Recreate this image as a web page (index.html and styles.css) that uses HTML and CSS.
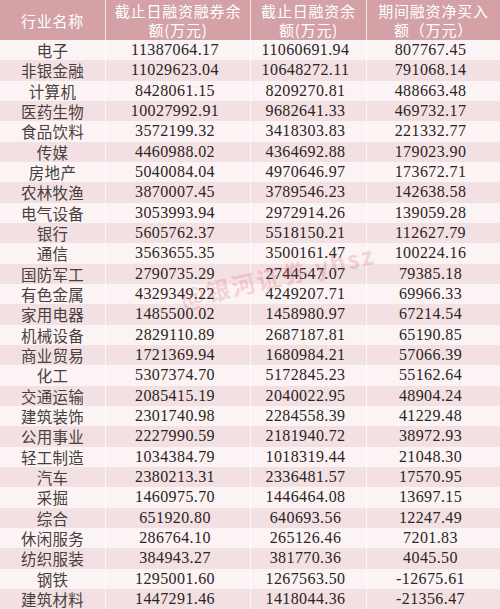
FILE: index.html
```html
<!DOCTYPE html>
<html lang="zh">
<head>
<meta charset="utf-8">
<title>行业融资余额</title>
<link rel="stylesheet" href="styles.css">
</head>
<body>
<div class="table">
  <div class="row head">
    <div class="cell">行业名称</div>
    <div class="cell">截止日融资融券余<br>额(万元)</div>
    <div class="cell">截止日融资余<br>额(万元)</div>
    <div class="cell">期间融资净买入<br>额（万元）</div>
  </div>
  <div class="row"><div class="cell name">电子</div><div class="cell num">11387064.17</div><div class="cell num">11060691.94</div><div class="cell num">807767.45</div></div>
  <div class="row"><div class="cell name">非银金融</div><div class="cell num">11029623.04</div><div class="cell num">10648272.11</div><div class="cell num">791068.14</div></div>
  <div class="row"><div class="cell name">计算机</div><div class="cell num">8428061.15</div><div class="cell num">8209270.81</div><div class="cell num">488663.48</div></div>
  <div class="row"><div class="cell name">医药生物</div><div class="cell num">10027992.91</div><div class="cell num">9682641.33</div><div class="cell num">469732.17</div></div>
  <div class="row"><div class="cell name">食品饮料</div><div class="cell num">3572199.32</div><div class="cell num">3418303.83</div><div class="cell num">221332.77</div></div>
  <div class="row"><div class="cell name">传媒</div><div class="cell num">4460988.02</div><div class="cell num">4364692.88</div><div class="cell num">179023.90</div></div>
  <div class="row"><div class="cell name">房地产</div><div class="cell num">5040084.04</div><div class="cell num">4970646.97</div><div class="cell num">173672.71</div></div>
  <div class="row"><div class="cell name">农林牧渔</div><div class="cell num">3870007.45</div><div class="cell num">3789546.23</div><div class="cell num">142638.58</div></div>
  <div class="row"><div class="cell name">电气设备</div><div class="cell num">3053993.94</div><div class="cell num">2972914.26</div><div class="cell num">139059.28</div></div>
  <div class="row"><div class="cell name">银行</div><div class="cell num">5605762.37</div><div class="cell num">5518150.21</div><div class="cell num">112627.79</div></div>
  <div class="row"><div class="cell name">通信</div><div class="cell num">3563655.35</div><div class="cell num">3500161.47</div><div class="cell num">100224.16</div></div>
  <div class="row"><div class="cell name">国防军工</div><div class="cell num">2790735.29</div><div class="cell num">2744547.07</div><div class="cell num">79385.18</div></div>
  <div class="row"><div class="cell name">有色金属</div><div class="cell num">4329349.22</div><div class="cell num">4249207.71</div><div class="cell num">69966.33</div></div>
  <div class="row"><div class="cell name">家用电器</div><div class="cell num">1485500.02</div><div class="cell num">1458980.97</div><div class="cell num">67214.54</div></div>
  <div class="row"><div class="cell name">机械设备</div><div class="cell num">2829110.89</div><div class="cell num">2687187.81</div><div class="cell num">65190.85</div></div>
  <div class="row"><div class="cell name">商业贸易</div><div class="cell num">1721369.94</div><div class="cell num">1680984.21</div><div class="cell num">57066.39</div></div>
  <div class="row"><div class="cell name">化工</div><div class="cell num">5307374.70</div><div class="cell num">5172845.23</div><div class="cell num">55162.64</div></div>
  <div class="row"><div class="cell name">交通运输</div><div class="cell num">2085415.19</div><div class="cell num">2040022.95</div><div class="cell num">48904.24</div></div>
  <div class="row"><div class="cell name">建筑装饰</div><div class="cell num">2301740.98</div><div class="cell num">2284558.39</div><div class="cell num">41229.48</div></div>
  <div class="row"><div class="cell name">公用事业</div><div class="cell num">2227990.59</div><div class="cell num">2181940.72</div><div class="cell num">38972.93</div></div>
  <div class="row"><div class="cell name">轻工制造</div><div class="cell num">1034384.79</div><div class="cell num">1018319.44</div><div class="cell num">21048.30</div></div>
  <div class="row"><div class="cell name">汽车</div><div class="cell num">2380213.31</div><div class="cell num">2336481.57</div><div class="cell num">17570.95</div></div>
  <div class="row"><div class="cell name">采掘</div><div class="cell num">1460975.70</div><div class="cell num">1446464.08</div><div class="cell num">13697.15</div></div>
  <div class="row"><div class="cell name">综合</div><div class="cell num">651920.80</div><div class="cell num">640693.56</div><div class="cell num">12247.49</div></div>
  <div class="row"><div class="cell name">休闲服务</div><div class="cell num">286764.10</div><div class="cell num">265126.46</div><div class="cell num">7201.83</div></div>
  <div class="row"><div class="cell name">纺织服装</div><div class="cell num">384943.27</div><div class="cell num">381770.36</div><div class="cell num">4045.50</div></div>
  <div class="row"><div class="cell name">钢铁</div><div class="cell num">1295001.60</div><div class="cell num">1267563.50</div><div class="cell num">-12675.61</div></div>
  <div class="row"><div class="cell name">建筑材料</div><div class="cell num">1447291.46</div><div class="cell num">1418044.36</div><div class="cell num">-21356.47</div></div>
  <div class="watermark">@银河证券 yhsz</div>
</div>
</body>
</html>
```
FILE: styles.css
```css
html, body {
  margin: 0;
  padding: 0;
  background: #fcf4f4;
}
.table {
  position: relative;
  width: 500px;
  height: 609px;
  display: flex;
  flex-direction: column;
  overflow: hidden;
  font-family: "Liberation Serif", "Noto Sans CJK SC", serif;
  color: #1e1a1a;
}
.row {
  flex: 1 1 0;
  min-height: 0;
  display: grid;
  grid-template-columns: 106px 145px 116px 133px;
  background: #fcf4f4;
}
.row:nth-child(odd) {
  background: #f3e0e2;
}
.row.head {
  flex: 0 0 40px;
  background: #d3a1a6;
  color: #ffffff;
}
.cell {
  display: flex;
  align-items: center;
  justify-content: center;
  text-align: center;
  font-size: 16px;
  line-height: 18px;
  border-right: 1px solid rgba(255, 255, 255, 0.75);
  white-space: nowrap;
}
.cell:last-child {
  border-right: none;
}
.head .cell {
  font-family: "Noto Sans CJK SC", sans-serif;
  font-size: 15px;
  line-height: 19px;
  letter-spacing: 0.8px;
}
.name {
  font-family: "Noto Sans CJK SC", sans-serif;
  font-size: 15.5px;
  line-height: 18px;
  color: #474040;
  letter-spacing: 0.3px;
}
.num {
  padding-right: 6px;
  letter-spacing: 0.4px;
  color: #2a2424;
}
.watermark {
  position: absolute;
  left: 178px;
  top: 258px;
  transform: rotate(-13deg);
  font-family: "Noto Sans CJK SC", sans-serif;
  font-weight: 700;
  font-size: 24px;
  letter-spacing: 2px;
  color: rgba(205, 70, 85, 0.2);
  white-space: nowrap;
  pointer-events: none;
}
```
